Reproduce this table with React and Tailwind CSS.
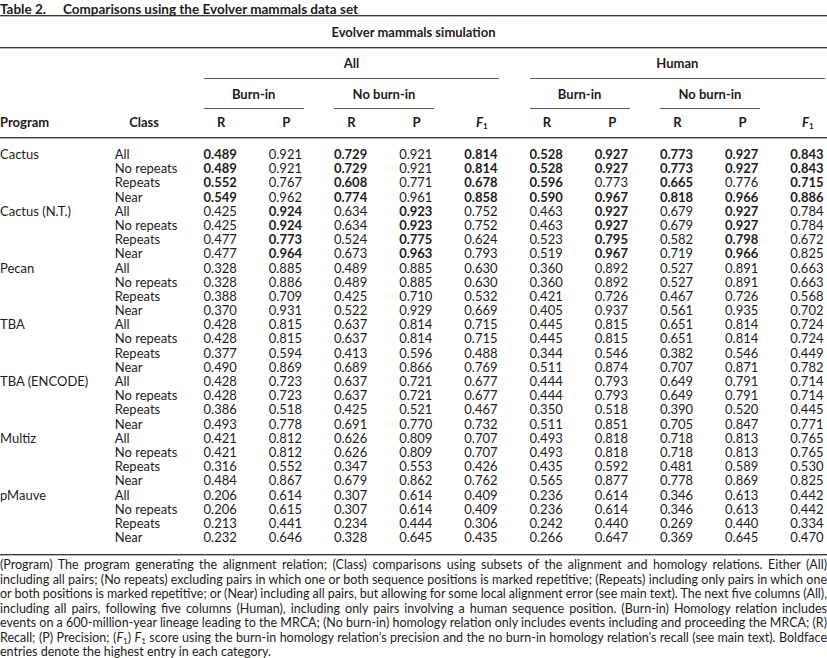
import React from "react";

const GRID = "grid grid-cols-[84.6px_58.6px_repeat(10,35px)] gap-x-[30.2px]";

const rows = [
  ["Cactus", "All", "*0.489 0.921 *0.729 0.921 *0.814 *0.528 *0.927 *0.773 *0.927 *0.843"],
  ["", "No repeats", "*0.489 0.921 *0.729 0.921 *0.814 *0.528 *0.927 *0.773 *0.927 *0.843"],
  ["", "Repeats", "*0.552 0.767 *0.608 0.771 *0.678 *0.596 0.773 *0.665 0.776 *0.715"],
  ["", "Near", "*0.549 0.962 *0.774 0.961 *0.858 *0.590 *0.967 *0.818 *0.966 *0.886"],
  ["Cactus (N.T.)", "All", "0.425 *0.924 0.634 *0.923 0.752 0.463 *0.927 0.679 *0.927 0.784"],
  ["", "No repeats", "0.425 *0.924 0.634 *0.923 0.752 0.463 *0.927 0.679 *0.927 0.784"],
  ["", "Repeats", "0.477 *0.773 0.524 *0.775 0.624 0.523 *0.795 0.582 *0.798 0.672"],
  ["", "Near", "0.477 *0.964 0.673 *0.963 0.793 0.519 *0.967 0.719 *0.966 0.825"],
  ["Pecan", "All", "0.328 0.885 0.489 0.885 0.630 0.360 0.892 0.527 0.891 0.663"],
  ["", "No repeats", "0.328 0.886 0.489 0.885 0.630 0.360 0.892 0.527 0.891 0.663"],
  ["", "Repeats", "0.388 0.709 0.425 0.710 0.532 0.421 0.726 0.467 0.726 0.568"],
  ["", "Near", "0.370 0.931 0.522 0.929 0.669 0.405 0.937 0.561 0.935 0.702"],
  ["TBA", "All", "0.428 0.815 0.637 0.814 0.715 0.445 0.815 0.651 0.814 0.724"],
  ["", "No repeats", "0.428 0.815 0.637 0.814 0.715 0.445 0.815 0.651 0.814 0.724"],
  ["", "Repeats", "0.377 0.594 0.413 0.596 0.488 0.344 0.546 0.382 0.546 0.449"],
  ["", "Near", "0.490 0.869 0.689 0.866 0.769 0.511 0.874 0.707 0.871 0.782"],
  ["TBA (ENCODE)", "All", "0.428 0.723 0.637 0.721 0.677 0.444 0.793 0.649 0.791 0.714"],
  ["", "No repeats", "0.428 0.723 0.637 0.721 0.677 0.444 0.793 0.649 0.791 0.714"],
  ["", "Repeats", "0.386 0.518 0.425 0.521 0.467 0.350 0.518 0.390 0.520 0.445"],
  ["", "Near", "0.493 0.778 0.691 0.770 0.732 0.511 0.851 0.705 0.847 0.771"],
  ["Multiz", "All", "0.421 0.812 0.626 0.809 0.707 0.493 0.818 0.718 0.813 0.765"],
  ["", "No repeats", "0.421 0.812 0.626 0.809 0.707 0.493 0.818 0.718 0.813 0.765"],
  ["", "Repeats", "0.316 0.552 0.347 0.553 0.426 0.435 0.592 0.481 0.589 0.530"],
  ["", "Near", "0.484 0.867 0.679 0.862 0.762 0.565 0.877 0.778 0.869 0.825"],
  ["pMauve", "All", "0.206 0.614 0.307 0.614 0.409 0.236 0.614 0.346 0.613 0.442"],
  ["", "No repeats", "0.206 0.615 0.307 0.614 0.409 0.236 0.614 0.346 0.613 0.442"],
  ["", "Repeats", "0.213 0.441 0.234 0.444 0.306 0.242 0.440 0.269 0.440 0.334"],
  ["", "Near", "0.232 0.646 0.328 0.645 0.435 0.266 0.647 0.369 0.645 0.470"],
];

const notes = [
  "(Program) The program generating the alignment relation; (Class) comparisons using subsets of the alignment and homology relations. Either (All)",
  "including all pairs; (No repeats) excluding pairs in which one or both sequence positions is marked repetitive; (Repeats) including only pairs in which one",
  "or both positions is marked repetitive; or (Near) including all pairs, but allowing for some local alignment error (see main text). The next five columns (All),",
  "including all pairs, following five columns (Human), including only pairs involving a human sequence position. (Burn-in) Homology relation includes",
  "events on a 600-million-year lineage leading to the MRCA; (No burn-in) homology relation only includes events including and proceeding the MRCA; (R)",
];

const Rule = () => (
  <div>
    <div className="h-px bg-[#3a3a3a]" />
    <div className="h-px bg-[#b5b5b5]" />
  </div>
);

const F1 = () => (
  <span>
    <span className="italic">F</span>
    <sub className="text-[8px] not-italic">1</sub>
  </span>
);

const Head = ({ children }) => <div className="text-center font-bold">{children}</div>;

export default function App() {
  return (
    <div className="w-[827px] h-[658px] overflow-hidden bg-white text-[#1d1b1c] font-['Lato','Liberation_Sans',sans-serif] text-[13px]">
      <div className="h-[15px] leading-[19px] text-[13.5px] font-bold whitespace-nowrap">
        <span className="inline-block w-[63px]">Table 2.</span>
        <span>Comparisons using the Evolver mammals data set</span>
      </div>
      <Rule />
      <div className="h-[30px] pt-px flex items-center justify-center font-bold">Evolver mammals simulation</div>
      <Rule />

      <div className={GRID}>
        <div className="col-start-3 col-span-5 h-[30px] pt-[5px] border-b border-[#5a5a5a]">
          <Head>All</Head>
        </div>
        <div className="col-start-8 col-span-5 h-[30px] pt-[5px] border-b border-[#5a5a5a]">
          <Head>Human</Head>
        </div>
      </div>
      <div className={GRID}>
        <div className="col-start-3 col-span-2 h-[30px] pt-[6px] border-b border-[#5a5a5a]">
          <Head>Burn-in</Head>
        </div>
        <div className="col-start-5 col-span-2 h-[30px] pt-[6px] border-b border-[#5a5a5a]">
          <Head>No burn-in</Head>
        </div>
        <div className="col-start-8 col-span-2 h-[30px] pt-[6px] border-b border-[#5a5a5a]">
          <Head>Burn-in</Head>
        </div>
        <div className="col-start-10 col-span-2 h-[30px] pt-[6px] border-b border-[#5a5a5a]">
          <Head>No burn-in</Head>
        </div>
      </div>
      <div className={`${GRID} h-[28px] items-center`}>
        <div className="font-bold">Program</div>
        <Head>Class</Head>
        <Head>R</Head>
        <Head>P</Head>
        <Head>R</Head>
        <Head>P</Head>
        <div className="text-center font-bold">
          <F1 />
        </div>
        <Head>R</Head>
        <Head>P</Head>
        <Head>R</Head>
        <Head>P</Head>
        <div className="text-center font-bold">
          <F1 />
        </div>
      </div>
      <Rule />

      <div className="pt-[8px] pb-[10px] leading-[14.18px]">
        {rows.map(([prog, cls, vals], i) => (
          <div key={i} className={GRID}>
            <div className="whitespace-nowrap">{prog}</div>
            <div className="whitespace-nowrap">{cls}</div>
            {vals.split(" ").map((v, j) =>
              v.startsWith("*") ? (
                <div key={j} className="font-bold">{v.slice(1)}</div>
              ) : (
                <div key={j}>{v}</div>
              )
            )}
          </div>
        ))}
      </div>
      <Rule />

      <div className="pt-[2px] text-[12.5px] leading-[14.5px] [word-spacing:-1.2px]">
        {notes.map((n, i) => (
          <div key={i} className="text-justify [text-align-last:justify] whitespace-nowrap">{n}</div>
        ))}
        <div className="text-justify [text-align-last:justify] whitespace-nowrap">
          Recall; (P) Precision; (<F1 />) <F1 /> score using the burn-in homology relation’s precision and the no burn-in homology relation’s recall (see main text). Boldface
        </div>
        <div className="[word-spacing:0px]">entries denote the highest entry in each category.</div>
      </div>
    </div>
  );
}
